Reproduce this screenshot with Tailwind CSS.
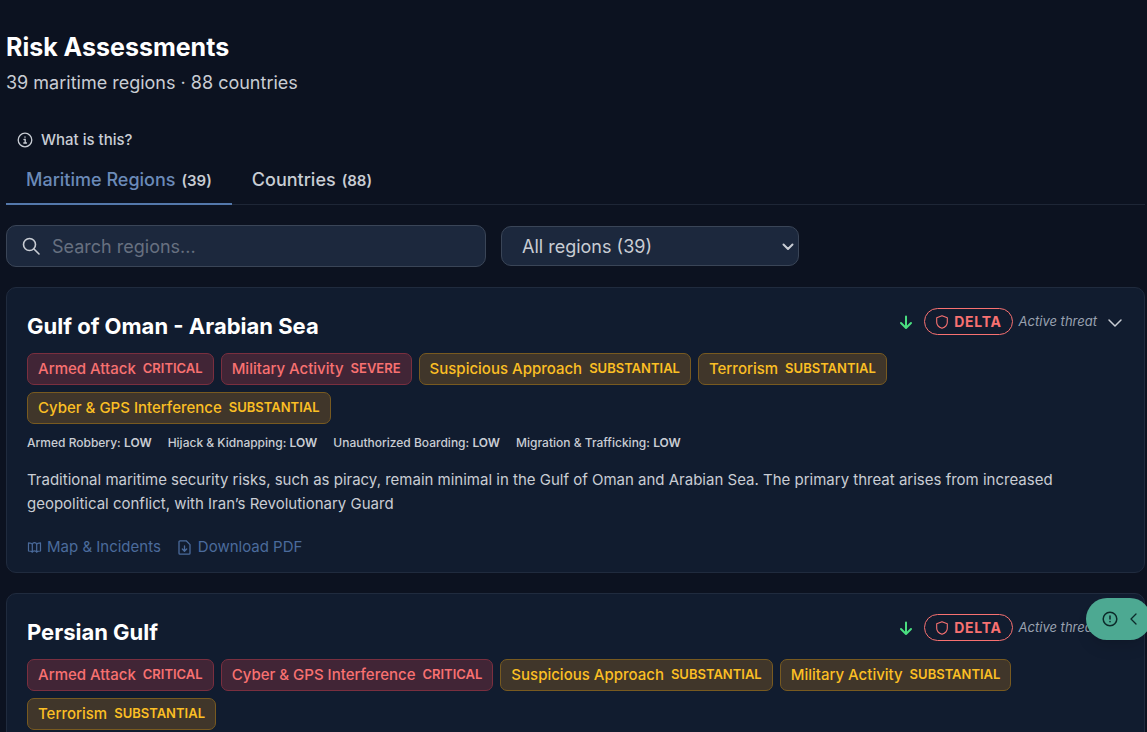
<!DOCTYPE html>
<html lang="en">

<head>
    <meta charset="UTF-8" />
    <meta name="viewport" content="width=device-width, initial-scale=1.0" />
    <title>Risk Assessments</title>
    <script src="https://cdn.jsdelivr.net/npm/@tailwindcss/browser@4"></script>
</head>

<body class="bg-[#0c1220] text-[#c9cdd4] font-[Inter,sans-serif] text-[15px] overflow-x-hidden">

    <!-- shared icons -->
    <svg class="hidden">
        <symbol id="arrow-down" viewBox="0 0 16 16" fill="none" stroke="currentColor" stroke-width="2" stroke-linecap="round" stroke-linejoin="round">
            <path d="M8 2.500v11M3 9l5 5 5-5" />
        </symbol>
        <symbol id="shield" viewBox="0 0 14 14" fill="none" stroke="currentColor" stroke-width="1.1" stroke-linejoin="round">
            <path d="M7 .7L12.300 2.700V7.200c0 2.700-1.800 4.900-5.300 6.100C3.500 12.100 1.700 9.900 1.700 7.200V2.700z" />
        </symbol>
        <symbol id="chevron-down" viewBox="0 0 16 16" fill="none" stroke="currentColor" stroke-width="1.5" stroke-linecap="round" stroke-linejoin="round">
            <path d="M2 6l6 6 6-6" />
        </symbol>
    </svg>

    <main class="pl-[6px] pr-[2px] pt-[29px]">
        <h1 class="text-[25px] leading-9 font-bold text-white">Risk Assessments</h1>
        <p class="text-[18px] leading-9">39 maritime regions · 88 countries</p>

        <button class="mt-[27px] ml-[11px] flex items-center gap-2 leading-6 font-medium">
            <svg class="size-4" viewBox="0 0 16 16" fill="none" stroke="currentColor" stroke-width="1.3" stroke-linecap="round">
                <circle cx="8" cy="8" r="6.800" />
                <path d="M7 7.500h1.200v3.500M6.800 11h2.700M8 4.900v.3" />
            </svg>
            What is this?
        </button>

        <div class="mt-[5px] flex border-b border-[#1e2636]" role="tablist">
            <button class="-mb-px px-5 text-[18px] leading-[45px] font-medium flex items-baseline gap-[6px] text-[#6b8ab8] border-b-2 border-[#5478ab]" role="tab" aria-selected="true">
                Maritime Regions <span class="text-[15px] font-semibold text-[#c9cdd4]">(39)</span>
            </button>
            <button class="-mb-px px-5 text-[18px] leading-[45px] font-medium flex items-baseline gap-[6px] border-b-2 border-transparent" role="tab" aria-selected="false">
                Countries <span class="text-[15px] font-semibold">(88)</span>
            </button>
        </div>

        <div class="mt-5 flex items-center gap-[15px]">
            <div class="relative w-[480px]">
                <label for="search" class="absolute left-4 top-3">
                    <svg class="size-[18px]" viewBox="0 0 18 18" fill="none" stroke="currentColor" stroke-width="1.6" stroke-linecap="round">
                        <circle cx="7.500" cy="7.500" r="6" />
                        <path d="M12 12l5 5" />
                    </svg>
                </label>
                <input id="search" type="text" aria-label="Search regions" placeholder="Search regions..." class="block w-full h-[42px] pl-[45px] pr-4 text-[18px] rounded-[10px] bg-[#1c283d] border border-[#3a4557] placeholder:text-[#677080]" />
            </div>
            <div class="relative w-[298px]">
                <select aria-label="Region" class="block w-full h-10 px-5 text-[18px] appearance-none rounded-[10px] bg-[#1c283d] border border-[#3a4557]">
                    <option>All regions (39)</option>
                </select>
                <svg class="absolute right-1 top-[14px] size-[14px] pointer-events-none" viewBox="0 0 14 14" fill="none" stroke="currentColor" stroke-width="2" stroke-linecap="round" stroke-linejoin="round">
                    <path d="M2.500 4.500L7 9l4.500-4.500" />
                </svg>
            </div>
        </div>

        <section class="mt-5 px-5 pt-5 pb-[13px] rounded-[10px] bg-[#111c2f] border border-[#202b3e]">
            <div class="flex items-start justify-between">
                <h2 class="text-[22px] leading-9 font-bold text-white">Gulf of Oman - Arabian Sea</h2>
                <div class="flex items-center">
                    <svg class="size-4 text-[#4ade80]"><use href="#arrow-down" /></svg>
                    <span class="ml-[10px] h-[27px] px-[10px] flex items-center gap-[5px] rounded-full border border-[#f87171] text-[#f87171] text-[14px] font-bold tracking-wider">
                        <svg class="size-[14px]"><use href="#shield" /></svg>DELTA
                    </span>
                    <span class="ml-[6px] text-[13px] italic text-[#99a1b0]">Active threat</span>
                    <button class="ml-[10px] mr-[1px]" aria-label="Expand"><svg class="size-4"><use href="#chevron-down" /></svg></button>
                </div>
            </div>
            <ul class="mt-[9px] flex flex-wrap gap-[7px] font-medium text-[#fbbf24]">
                <li class="h-8 px-[10px] flex items-center gap-[7px] rounded-[7px] border bg-[#412536] border-[#7a2f3f] text-[#f87171]">Armed Attack <b class="text-[13px] font-semibold">CRITICAL</b></li>
                <li class="h-8 px-[10px] flex items-center gap-[7px] rounded-[7px] border bg-[#412536] border-[#7a2f3f] text-[#f87171]">Military Activity <b class="text-[13px] font-semibold">SEVERE</b></li>
                <li class="h-8 px-[10px] flex items-center gap-[7px] rounded-[7px] border bg-[#40362a] border-[#785a20]">Suspicious Approach <b class="text-[13px] font-semibold">SUBSTANTIAL</b></li>
                <li class="h-8 px-[10px] flex items-center gap-[7px] rounded-[7px] border bg-[#40362a] border-[#785a20]">Terrorism <b class="text-[13px] font-semibold">SUBSTANTIAL</b></li>
                <li class="h-8 px-[10px] flex items-center gap-[7px] rounded-[7px] border bg-[#40362a] border-[#785a20]">Cyber &amp; GPS Interference <b class="text-[13px] font-semibold">SUBSTANTIAL</b></li>
            </ul>
            <ul class="mt-2 flex flex-wrap gap-x-4 text-[12px] leading-[22px] font-medium">
                <li>Armed Robbery: <b class="font-semibold">LOW</b></li>
                <li>Hijack &amp; Kidnapping: <b class="font-semibold">LOW</b></li>
                <li>Unauthorized Boarding: <b class="font-semibold">LOW</b></li>
                <li>Migration &amp; Trafficking: <b class="font-semibold">LOW</b></li>
            </ul>
            <p class="mt-[14px] max-w-[1060px] leading-6">Traditional maritime security risks, such as piracy, remain minimal in the Gulf of Oman and Arabian Sea. The primary threat arises from increased geopolitical conflict, with Iran’s Revolutionary Guard</p>
            <div class="mt-[19px] flex gap-4 leading-6 text-[#4b6b9c]">
                <a href="#" class="flex items-center gap-[5px]">
                    <svg class="size-[15px]" viewBox="0 0 15 15" fill="none" stroke="currentColor" stroke-width="1.2" stroke-linejoin="round">
                        <path d="M1.500 2.800C3 2.800 4.500 2.800 5.300 4.200C6 2 9 2 9.700 4.200C10.500 2.800 12 2.800 13.500 2.800V11C12 11 10.500 11 9.700 12.200C9 10.500 6 10.500 5.300 12.200C4.500 11 3 11 1.500 11zM5.300 4.200v8M9.700 4.200v8" />
                    </svg>
                    Map &amp; Incidents
                </a>
                <a href="#" class="flex items-center gap-[6px]">
                    <svg class="size-[15px]" viewBox="0 0 15 15" fill="none" stroke="currentColor" stroke-width="1.300" stroke-linecap="round" stroke-linejoin="round">
                        <path d="M3 .8h6.200L13 4.600v8.600a1 1 0 0 1-1 1H3a1 1 0 0 1-1-1V1.800a1 1 0 0 1 1-1zM7.500 6v5M5.300 9l2.200 2.200L9.700 9" />
                    </svg>
                    Download PDF
                </a>
            </div>
        </section>

        <section class="mt-5 px-5 pt-5 pb-[13px] rounded-[10px] bg-[#111c2f] border border-[#202b3e]">
            <div class="flex items-start justify-between">
                <h2 class="text-[22px] leading-9 font-bold text-white">Persian Gulf</h2>
                <div class="flex items-center">
                    <svg class="size-4 text-[#4ade80]"><use href="#arrow-down" /></svg>
                    <span class="ml-[10px] h-[27px] px-[10px] flex items-center gap-[5px] rounded-full border border-[#f87171] text-[#f87171] text-[14px] font-bold tracking-wider">
                        <svg class="size-[14px]"><use href="#shield" /></svg>DELTA
                    </span>
                    <span class="ml-[6px] text-[13px] italic text-[#99a1b0]">Active threat</span>
                    <button class="ml-[10px] mr-[1px]" aria-label="Expand"><svg class="size-4"><use href="#chevron-down" /></svg></button>
                </div>
            </div>
            <ul class="mt-[9px] flex flex-wrap gap-[7px] font-medium text-[#fbbf24]">
                <li class="h-8 px-[10px] flex items-center gap-[7px] rounded-[7px] border bg-[#412536] border-[#7a2f3f] text-[#f87171]">Armed Attack <b class="text-[13px] font-semibold">CRITICAL</b></li>
                <li class="h-8 px-[10px] flex items-center gap-[7px] rounded-[7px] border bg-[#412536] border-[#7a2f3f] text-[#f87171]">Cyber &amp; GPS Interference <b class="text-[13px] font-semibold">CRITICAL</b></li>
                <li class="h-8 px-[10px] flex items-center gap-[7px] rounded-[7px] border bg-[#40362a] border-[#785a20]">Suspicious Approach <b class="text-[13px] font-semibold">SUBSTANTIAL</b></li>
                <li class="h-8 px-[10px] flex items-center gap-[7px] rounded-[7px] border bg-[#40362a] border-[#785a20]">Military Activity <b class="text-[13px] font-semibold">SUBSTANTIAL</b></li>
                <li class="h-8 px-[10px] flex items-center gap-[7px] rounded-[7px] border bg-[#40362a] border-[#785a20]">Terrorism <b class="text-[13px] font-semibold">SUBSTANTIAL</b></li>
            </ul>
        </section>
    </main>

    <!-- feedback tab -->
    <button class="fixed -right-1 bottom-[92px] w-[65px] h-[42px] pl-4 flex items-center gap-3 rounded-full bg-[#4da992] text-[#0c2a2a] shadow-lg" aria-label="Feedback">
        <svg class="size-4" viewBox="0 0 16 16" fill="none" stroke="currentColor" stroke-width="1.500" stroke-linecap="round">
            <circle cx="8" cy="8" r="6.800" />
            <path d="M8 5v3M8 10.600v.2" />
        </svg>
        <svg class="w-[7px] h-3" viewBox="0 0 7 12" fill="none" stroke="currentColor" stroke-width="1.300" stroke-linecap="round" stroke-linejoin="round">
            <path d="M6 1L1 6l5 5" />
        </svg>
    </button>

</body>

</html>
